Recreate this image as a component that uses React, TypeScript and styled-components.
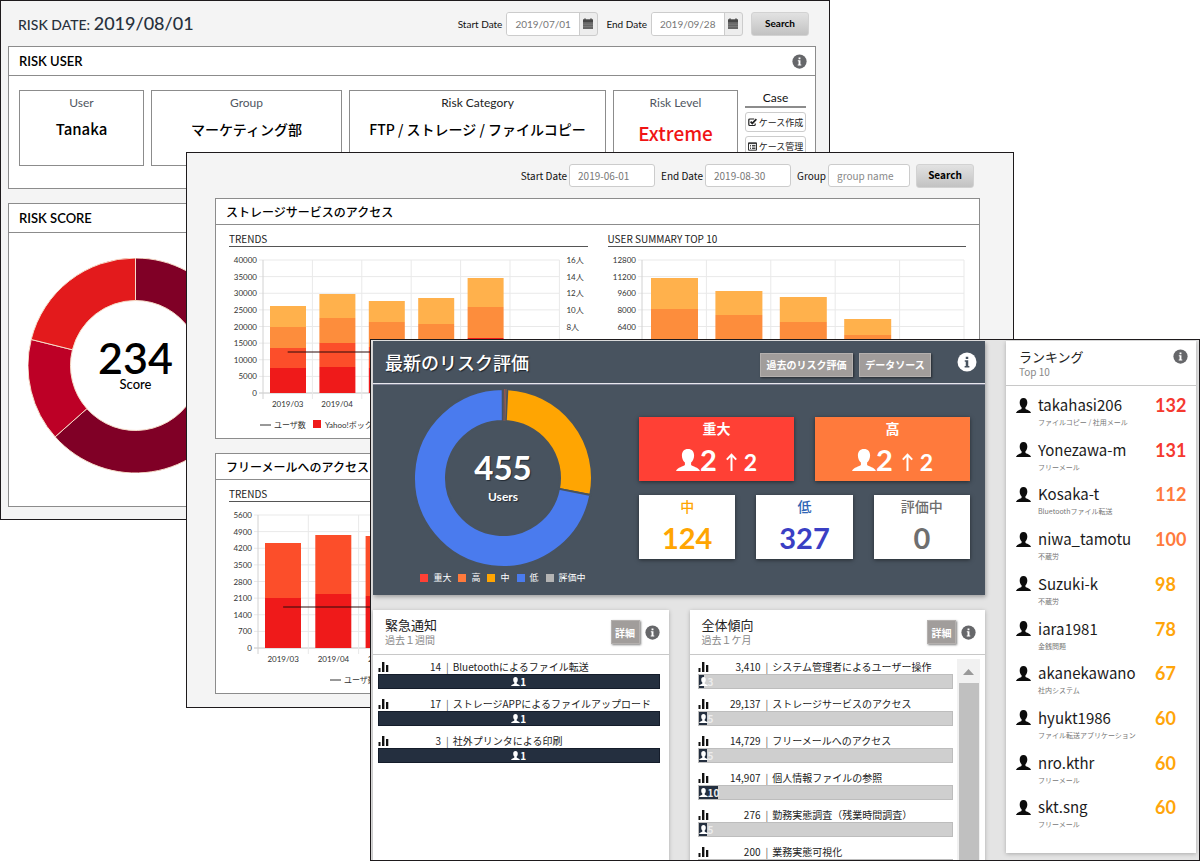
import React from 'react';
import styled, { createGlobalStyle } from 'styled-components';

const GOTHIC = '"Noto Sans CJK JP", sans-serif';
const LATO = 'Lato, "Noto Sans CJK JP", sans-serif';

const GlobalStyle = createGlobalStyle`
  *, *::before, *::after { box-sizing: border-box; }
  html, body, #root { height: 100%; }
  body { margin: 0; background: #fff; color: #111; font-family: ${GOTHIC}; }
  h1, h2, h3, p, ul, dl, dd { margin: 0; padding: 0; font-weight: inherit; }
  ul { list-style: none; }
  button, input { font-family: inherit; margin: 0; }
  svg { display: block; flex: none; }
`;

/* ---------- windows on the canvas ---------- */

const Canvas = styled.div`
  position: relative;
  min-width: 1000px;
  min-height: 100%;
  overflow: hidden;
`;

const Frame = styled.section<{ $left: number; $right: number; $top: number }>`
  position: absolute;
  left: ${(p) => p.$left}px;
  right: ${(p) => p.$right}px;
  top: ${(p) => p.$top}px;
  border: 1px solid #1e1a1c;
  background: #f4f4f4;
`;

const UserFrame = styled(Frame)`
  padding: 0 13px 12px 7px;
`;

const TrendFrame = styled(Frame)`
  padding: 0 33px 13px 28px;
`;

const BoardFrame = styled(Frame)`
  bottom: 0;
  overflow: hidden;
  background: #e4e4e4;
  padding: 1px 3px 0 2px;
  display: grid;
  grid-template-columns: minmax(0, 1fr) 190px;
  column-gap: 21px;
`;

/* ---------- shared parts ---------- */

const Panel = styled.section`
  background: #fff;
  border: 1px solid #8c8c8c;
  & + & { margin-top: 14px; }
`;

const PanelHead = styled.header<{ $h: number }>`
  display: flex;
  align-items: center;
  justify-content: space-between;
  height: ${(p) => p.$h}px;
  padding: 0 8px 0 10px;
  border-bottom: 1px solid #8c8c8c;
`;

const PanelTitle = styled.h2<{ $lato?: boolean }>`
  font: 500 12px/16px ${GOTHIC};
  ${(p) => p.$lato && `font-family: ${LATO}; font-size: 13px; font-weight: 600;`}
  color: #000;
`;

const IconButton = styled.button`
  display: block;
  padding: 0;
  border: 0;
  background: none;
`;

const InfoIcon = ({ size = 15, disc = '#66676a', mark = '#fff' }) => (
  <svg width={size} height={size} viewBox="0 0 16 16" aria-hidden="true">
    <circle cx="8" cy="8" r="7.6" fill={disc} />
    <path d="M7 3.700h2v1.900H7zM6.200 6.600H9v4.500h.9v1.200H6.100v-1.200H7V7.800h-.8z" fill={mark} />
  </svg>
);

const PersonIcon = ({ w, h, fill = '#fff' }: { w: number; h: number; fill?: string }) => (
  <svg width={w} height={h} viewBox="0 0 24 22" preserveAspectRatio="none" aria-hidden="true">
    <path
      fill={fill}
      d="M12 0C8 0 5.900 2.600 5.900 6.600c0 2.900 1.200 5.600 3 7v2.300C7.600 17.600 1.300 18 0 22h24c-1.300-4-7.600-4.400-8.900-6.100v-2.300c1.800-1.400 3-4.100 3-7C18.100 2.600 16 0 12 0z"
    />
  </svg>
);

const CalendarIcon = () => (
  <svg width="10" height="11" viewBox="0 0 10 11" aria-hidden="true">
    <path d="M0 1.500h10V11H0zM1 .5h2v2H1zM7 .5h2v2H7z" fill="#666" />
    <path d="M0 1.500h10v2.500H0z" fill="#484848" />
    <path d="M0 6.200h10M0 8.600h10" stroke="#8c8c8c" strokeWidth=".6" />
  </svg>
);

const CheckIcon = () => (
  <svg width="9" height="9" viewBox="0 0 9 9" fill="none" stroke="#222" aria-hidden="true">
    <path d="M6.200 1H1.800Q.8 1 .8 2v4.500q0 1 1 1h4.400q1 0 1-1V5.500" strokeWidth="1.200" />
    <path d="M2.600 3.600l1.700 1.800L8.400 1.200" strokeWidth="1.700" />
  </svg>
);

const ListIcon = () => (
  <svg width="9" height="9" viewBox="0 0 9 9" fill="none" stroke="#333" aria-hidden="true">
    <path d="M.5.8h8v7.400h-8zM.5 1.600h8" />
    <path d="M2 3.500h1M4 3.500h3.500M2 5h1M4 5h3.500M2 6.500h1M4 6.500h3.500" strokeWidth=".9" />
  </svg>
);

const BarsIcon = () => (
  <svg width="11" height="10" viewBox="0 0 11 10" aria-hidden="true">
    <path d="M.5 6h2v4h-2zM4 0h2.400v10H4zM8 3h2.300v7H8z" fill="#111" />
  </svg>
);

/* ---------- search toolbars ---------- */

const Toolbar = styled.form`
  display: flex;
  align-items: center;
  height: 45px;
`;

const RiskToolbar = styled(Toolbar)`
  padding: 0 7px 0 10px;
`;

const TrendToolbar = styled(Toolbar)`
  justify-content: flex-end;
  padding-right: 6px;
`;

const DateHeading = styled.h1`
  flex: 1;
  font: 500 14px/20px ${LATO};
  color: #27313c;
  white-space: nowrap;
`;

const DateFigure = styled.span`
  font-size: 18px;
`;

const Field = styled.div<{ $lato?: boolean }>`
  display: flex;
  align-items: center;
  gap: ${(p) => (p.$lato ? 4 : 2)}px;
  margin-right: ${(p) => (p.$lato ? 8 : 6)}px;
  font: 400 10px/14px ${(p) => (p.$lato ? LATO : GOTHIC)};
`;

const FieldLabel = styled.label`
  color: #111;
  white-space: nowrap;
`;

const TextBox = styled.input<{ $w: number }>`
  width: ${(p) => p.$w}px;
  height: 23px;
  padding: 0 8px;
  border: 1px solid #ccc;
  border-radius: 3px;
  background: #fff;
  color: #777;
  font-size: 10px;
  &::placeholder { color: #888; opacity: 1; }
`;

const DateGroup = styled.span`
  display: flex;
  height: 24px;
  border: 1px solid #ccc;
  border-radius: 3px;
  background: #ededed;
  overflow: hidden;
`;

const DateBox = styled(TextBox)`
  height: 22px;
  border-width: 0 1px 0 0;
  border-radius: 0;
`;

const CalendarButton = styled(IconButton)`
  width: 17px;
  padding: 0 3px;
`;

const SearchButton = styled.button`
  height: 24px;
  width: 58px;
  border: 1px solid #d2d2d2;
  border-radius: 3px;
  background: linear-gradient(#e2e2e2, #c2c2c2);
  color: #000;
  font-size: 10px;
  font-weight: 700;
  padding: 0 0 2px;
`;

const RiskSearch = styled(SearchButton)`
  font-family: ${LATO};
`;

/* ---------- risk user ---------- */

const UserGrid = styled.div`
  display: grid;
  grid-template-columns: 125fr 191fr 257fr 125fr 61fr;
  gap: 7px;
  padding: 14px 9px 22px 10px;
`;

const FactBox = styled.div`
  height: 76px;
  border: 1px solid #8c8c8c;
  padding-top: 4px;
  text-align: center;
  white-space: nowrap;
`;

const FactLabel = styled.p<{ $dark?: boolean }>`
  font: 400 12px/16px ${LATO};
  color: ${(p) => (p.$dark ? '#222' : '#4f5661')};
`;

const FactValue = styled.p<{ $size?: number; $color?: string }>`
  margin-top: 4px;
  font-weight: 500;
  font-size: ${(p) => p.$size ?? 14}px;
  line-height: ${(p) => (p.$size && p.$size > 16 ? 36 : 28)}px;
  color: ${(p) => p.$color ?? '#000'};
`;

const CaseTitle = styled.p`
  border-bottom: 2px solid #8c8c8c;
  font: 400 12px/16px ${LATO};
  text-align: center;
`;

const CaseButton = styled.button`
  display: flex;
  align-items: center;
  justify-content: center;
  gap: 2px;
  width: 100%;
  height: 20px;
  margin-top: 4px;
  padding: 0;
  border: 1px solid #ccc;
  border-radius: 3px;
  background: #fff;
  color: #222;
  font-size: 9px;
  white-space: nowrap;
`;

/* ---------- doughnuts ---------- */

const arc = (c: number, r0: number, r1: number, a0: number, a1: number) => {
  const pt = (r: number, a: number) => {
    const t = ((a - 90) * Math.PI) / 180;
    return `${(c + r * Math.cos(t)).toFixed(2)} ${(c + r * Math.sin(t)).toFixed(2)}`;
  };
  const large = a1 - a0 > 180 ? 1 : 0;
  return `M${pt(r1, a0)}A${r1} ${r1} 0 ${large} 1 ${pt(r1, a1)}L${pt(r0, a1)}A${r0} ${r0} 0 ${large} 0 ${pt(r0, a0)}Z`;
};

/* A sliver is too thin to carry the separator line. */
type Slice = { from: number; to: number; fill: string; sliver?: boolean };

const Ring = styled.div`
  display: grid;
  justify-items: center;
  align-items: center;
  & > * { grid-area: 1 / 1; }
`;

const RingText = styled.p<{ $light?: boolean }>`
  text-align: center;
  font-family: ${LATO};
  color: ${(p) => (p.$light ? '#fff' : '#000')};
  text-shadow: ${(p) => (p.$light ? '1px 1px 1px #222a33' : 'none')};
`;

const RingValue = styled.span<{ $size: number; $line: number; $bold?: boolean }>`
  display: block;
  font-size: ${(p) => p.$size}px;
  line-height: ${(p) => p.$line}px;
  font-weight: ${(p) => (p.$bold ? 700 : 600)};
`;

const RingCaption = styled.span<{ $size: number; $gap?: number; $bold?: boolean }>`
  display: block;
  margin-top: ${(p) => p.$gap ?? 0}px;
  font-size: ${(p) => p.$size}px;
  line-height: 16px;
  font-weight: ${(p) => (p.$bold ? 700 : 500)};
`;

const Doughnut = ({
  size,
  hole,
  slices,
  line,
  lineWidth,
}: {
  size: number;
  hole: number;
  slices: Slice[];
  line: string;
  lineWidth: number;
}) => (
  <svg width={size} height={size} viewBox={`0 0 ${size} ${size}`} aria-hidden="true">
    {slices.map((s) => (
      <path
        key={s.from}
        d={arc(size / 2, hole, size / 2, s.from, s.to)}
        fill={s.fill}
        stroke={s.sliver ? 'none' : line}
        strokeWidth={lineWidth}
      />
    ))}
  </svg>
);

const ScoreBody = styled.div`
  display: flex;
  padding: 25px 0 33px 19px;
`;

const scoreSlices: Slice[] = [
  { from: 0, to: 228.4, fill: '#800026' },
  { from: 228.4, to: 284, fill: '#bd0026' },
  { from: 284, to: 360, fill: '#e31a1c' },
];

const userSlices: Slice[] = [
  { from: 2.8, to: 101, fill: '#ffa502' },
  { from: 101, to: 359.8, fill: '#4a7bee' },
  { from: 0.6, to: 1.2, fill: '#a8544a', sliver: true },
  { from: 1.7, to: 2.2, fill: '#a86a4a', sliver: true },
];

/* ---------- stacked column charts ---------- */

const ChartBody = styled.div`
  display: grid;
  grid-template-columns: minmax(0, 1fr) minmax(0, 1fr);
  column-gap: 20px;
  padding: 7px 13px 0;
`;

const ChartTitle = styled.h3`
  font: 400 10px/14px ${GOTHIC};
  color: #222;
  border-bottom: 1px solid #555;
`;

const ChartSvg = styled.svg`
  font: 400 8px ${LATO};
  fill: #333;
`;

/* One column lists the y of each layer's top edge, from the upper layer down. */
type Column = { label?: string; tops: number[]; fills: string[] };

type ChartProps = {
  ticks: string[];
  rightTicks?: string[];
  left: number;
  step: number;
  slots: number;
  barWidth: number;
  barInset: number;
  columns: Column[];
  line?: number;
  legend?: { x: number; items: string[] };
};

const TOP = 13;
const ROW = 16.625;
const BASE = 146;

const StackChart = (p: ChartProps) => {
  const right = p.left + p.step * p.slots;
  return (
    <ChartSvg width="358" height="191" viewBox="0 0 358 191">
      {p.ticks.map((t, i) => (
        <g key={t}>
          <path
            d={`M${p.left - 4} ${TOP + i * ROW}H${right}`}
            stroke={t === '0' ? '#c4c4c4' : '#e9e9e9'}
          />
          <text x={p.left - 6} y={TOP + i * ROW + 3} textAnchor="end">{t}</text>
        </g>
      ))}
      {p.rightTicks?.map((t, i) => (
        <text key={t} x={right + 7} y={TOP + i * ROW + 3}>{t}</text>
      ))}
      {Array.from({ length: p.slots + 1 }, (_, i) => (
        <path
          key={i}
          d={`M${p.left + i * p.step} ${TOP}V${BASE + 6}`}
          stroke={i === 0 ? '#d2d2d2' : '#e9e9e9'}
        />
      ))}
      {p.columns.map((c, i) => {
        const x = p.left + i * p.step + p.barInset;
        return (
          <g key={i}>
            {c.tops.map((top, k) => (
              <rect
                key={k}
                x={x}
                y={top}
                width={p.barWidth}
                height={(c.tops[k + 1] ?? BASE) - top}
                fill={c.fills[k]}
              />
            ))}
            {c.label && (
              <text x={p.left + (i + 0.5) * p.step} y={BASE + 14} textAnchor="middle">{c.label}</text>
            )}
          </g>
        );
      })}
      {p.line && (
        <path d={`M${p.left + p.step / 2} ${p.line}H${right - p.step}`} stroke="#2b0a0a" />
      )}
      {p.legend && (
        <g>
          <path d={`M${p.legend.x} 178h11`} stroke="#333" />
          <text x={p.legend.x + 14} y="181">{p.legend.items[0]}</text>
          {p.legend.items[1] && (
            <>
              <rect x={p.legend.x + 53} y="173" width="8" height="8" fill="#ef1a1a" />
              <text x={p.legend.x + 65} y="181">{p.legend.items[1]}</text>
            </>
          )}
        </g>
      )}
    </ChartSvg>
  );
};

const warm = ['#ffb14c', '#fd8d3c', '#fc4e2a', '#ef1a1a'];
const hot = ['#fc4e2a', '#ef1a1a'];

const storageColumns: Column[] = [
  { label: '2019/03', tops: [59, 80, 101, 121], fills: warm },
  { label: '2019/04', tops: [47, 71, 96, 120], fills: warm },
  { tops: [54, 75, 100, 121], fills: warm },
  { tops: [51, 77, 100, 121], fills: warm },
  { tops: [31, 60, 91], fills: ['#ffb14c', '#fd8d3c', '#ef1a1a'] },
];

const summaryColumns: Column[] = [
  { tops: [31, 62], fills: warm },
  { tops: [44, 68], fills: warm },
  { tops: [50, 75], fills: warm },
  { tops: [72, 88], fills: warm },
];

const mailColumns: Column[] = [
  { label: '2019/03', tops: [41, 96], fills: hot },
  { label: '2019/04', tops: [33, 92], fills: hot },
  { label: '2019/05', tops: [34, 94], fills: hot },
];

/* ---------- risk dashboard ---------- */

const MainColumn = styled.div`
  display: flex;
  flex-direction: column;
  gap: 15px;
  min-width: 0;
`;

const Hero = styled.section`
  height: 254px;
  background: #48535f;
  box-shadow: 1px 2px 4px rgba(0, 0, 0, 0.3);
`;

const HeroHead = styled.header`
  display: flex;
  align-items: center;
  gap: 6px;
  height: 43px;
  padding: 0 8px 0 12px;
  border-bottom: 1px solid #e8e8ee;
  box-shadow: 0 1px 0 #7b7f92;
`;

const HeroTitle = styled.h1`
  flex: 1;
  font-size: 18px;
  line-height: 26px;
  font-weight: 500;
  color: #fff;
  text-shadow: 1px 1px 1px #1d232b;
`;

const GreyButton = styled.button<{ $w: number }>`
  width: ${(p) => p.$w}px;
  height: 24px;
  padding: 0;
  border: 1px solid #b4b0ae;
  background: #a19d9b;
  box-shadow: 1px 1px 2px rgba(0, 0, 0, 0.5);
  color: #fff;
  font-size: 10px;
  font-weight: 700;
  white-space: nowrap;
`;

const HeroButton = styled(GreyButton)`
  margin-top: 5px;
`;

const HeroInfo = styled(IconButton)`
  margin-left: 20px;
`;

const HeroBody = styled.div`
  display: flex;
`;

const UsersColumn = styled.div`
  width: 260px;
  padding-top: 5px;
`;

const Legend = styled.ul`
  display: flex;
  justify-content: center;
  margin-top: 4px;
  gap: 7px;
`;

const LegendItem = styled.li<{ $color: string }>`
  display: flex;
  align-items: center;
  gap: 5px;
  font: 400 9px/14px ${GOTHIC};
  color: #fff;
  &::before {
    content: '';
    width: 8px;
    height: 8px;
    background: ${(p) => p.$color};
  }
`;

const Levels = styled.div`
  flex: 1;
  padding: 33px 15px 0 6px;
`;

const LevelRow = styled.div<{ $cols: number }>`
  display: grid;
  grid-template-columns: repeat(${(p) => p.$cols}, minmax(0, 1fr));
  column-gap: 21px;
  & + & { margin-top: 14px; }
`;

const LevelCard = styled.article<{ $bg?: string; $fg: string }>`
  height: 64px;
  background: ${(p) => p.$bg ?? '#fff'};
  color: ${(p) => p.$fg};
  box-shadow: 0 1px 4px rgba(0, 0, 0, 0.5);
  text-align: center;
`;

const LevelName = styled.h3<{ $color?: string; $bold?: boolean }>`
  margin-bottom: 2px;
  font-size: 14px;
  line-height: 22px;
  font-weight: ${(p) => (p.$bold ? 700 : 500)};
  color: ${(p) => p.$color ?? 'inherit'};
`;

const LevelCount = styled.p`
  font: 700 29px/38px ${LATO};
`;

const LevelLine = styled.p`
  display: flex;
  justify-content: center;
  align-items: baseline;
  font: 700 29px/38px ${LATO};
`;

const LevelDelta = styled.span`
  font-size: 23px;
`;

const ArrowSvg = styled.svg`
  margin: 0 7px 0 9px;
`;

const ArrowUp = () => (
  <ArrowSvg width="11" height="18" viewBox="0 0 11 18" aria-hidden="true">
    <path d="M5.500 18V1.800M.8 6.600l4.700-5 4.700 5" fill="none" stroke="#fff" strokeWidth="2" />
  </ArrowSvg>
);

const LowerRow = styled.div`
  flex: 1;
  display: grid;
  grid-template-columns: minmax(0, 1fr) minmax(0, 1fr);
  column-gap: 21px;
`;

const Card = styled.section`
  display: flex;
  flex-direction: column;
  background: #fff;
  box-shadow: 0 1px 4px rgba(0, 0, 0, 0.25);
`;

const CardHead = styled.header`
  display: flex;
  align-items: center;
  gap: 5px;
  height: 45px;
  padding: 0 9px 0 12px;
  border-bottom: 1px solid #c8c8c8;
`;

const CardTitles = styled.div`
  flex: 1;
`;

const CardTitle = styled.h2`
  font-size: 13px;
  line-height: 16px;
  color: #222;
`;

const CardSub = styled.p`
  font-size: 10px;
  line-height: 14px;
  color: #888;
`;

const EventArea = styled.div`
  display: flex;
  padding: 4px 9px 0 5px;
`;

const EventList = styled.ul`
  flex: 1;
  min-width: 0;
`;

const EventItem = styled.li`
  height: 37px;
`;

const EventLine = styled.div`
  display: flex;
  align-items: center;
  height: 15px;
  font-size: 10px;
  color: #222;
  white-space: nowrap;
`;

const EventCount = styled.span`
  width: 52px;
  text-align: right;
`;

const EventName = styled.span`
  margin-left: 5px;
  &::before {
    content: '|';
    margin-right: 4px;
    color: #555;
  }
`;

const Meter = styled.div<{ $full?: boolean }>`
  display: flex;
  height: 15px;
  border: 1px solid ${(p) => (p.$full ? '#141c2a' : '#bdbdbd')};
  background: #cfcfcf;
`;

const MeterFill = styled.span<{ $full?: boolean }>`
  display: flex;
  align-items: center;
  justify-content: ${(p) => (p.$full ? 'center' : 'flex-start')};
  background: #242f3f;
  color: ${(p) => (p.$full ? '#fff' : '#ececec')};
  font: 700 10px/12px ${GOTHIC};
`;

const Scroller = styled.div`
  display: flex;
  flex-direction: column;
  align-items: center;
  width: 23px;
  height: 202px;
  margin-left: 4px;
  background: #f1f1f1;
`;

const ScrollUp = styled(IconButton)`
  padding: 10px 0 8px;
`;

const ScrollThumb = styled.span`
  flex: 1;
  width: 20px;
  background: #c0c0c0;
`;

const TrendArea = styled(EventArea)`
  padding: 4px 5px 0 8px;
`;

const RankCard = styled(Card)`
  height: 512px;
`;

const RankHead = styled(CardHead)`
  padding: 0 8px 0 13px;
  align-items: flex-start;
  & > * { margin-top: 8px; }
`;

const RankList = styled.ul`
  flex: 1;
  display: flex;
  flex-direction: column;
  padding: 8px 5px 12px 10px;
`;

const RankItem = styled.li`
  flex: 1;
  display: grid;
  grid-template-columns: 22px 1fr 36px;
  align-content: start;
  align-items: center;
`;

const RankName = styled.span`
  font-size: 15px;
  line-height: 22px;
  color: #1b1b1b;
`;

const RankScore = styled.span<{ $color: string }>`
  font: 700 18px/22px ${LATO};
  color: ${(p) => p.$color};
`;

const RankReason = styled.span`
  grid-column: 2 / 4;
  font-size: 7px;
  line-height: 12px;
  color: #777;
  white-space: nowrap;
`;

const alerts = [
  { count: '14', name: 'Bluetoothによるファイル転送' },
  { count: '17', name: 'ストレージAPPによるファイルアップロード' },
  { count: '3', name: '社外プリンタによる印刷' },
];

const trends = [
  { count: '3,410', name: 'システム管理者によるユーザー操作', users: 3, share: 2 },
  { count: '29,137', name: 'ストレージサービスのアクセス', users: 5, share: 3.5 },
  { count: '14,729', name: 'フリーメールへのアクセス', users: 5, share: 3.5 },
  { count: '14,907', name: '個人情報ファイルの参照', users: 10, share: 7.5 },
  { count: '276', name: '勤務実態調査（残業時間調査）', users: 5, share: 3.5 },
  { count: '200', name: '業務実態可視化', users: 5, share: 3.5 },
];

const RED = '#f5392f';
const CORAL = '#ff7a3c';
const AMBER = '#ffa50a';

const ranking = [
  { name: 'takahasi206', reason: 'ファイルコピー / 社用メール', score: 132, color: RED },
  { name: 'Yonezawa-m', reason: 'フリーメール', score: 131, color: RED },
  { name: 'Kosaka-t', reason: 'Bluetoothファイル転送', score: 112, color: CORAL },
  { name: 'niwa_tamotu', reason: '不蔵労', score: 100, color: CORAL },
  { name: 'Suzuki-k', reason: '不蔵労', score: 98, color: AMBER },
  { name: 'iara1981', reason: '金銭問題', score: 78, color: AMBER },
  { name: 'akanekawano', reason: '社内システム', score: 67, color: AMBER },
  { name: 'hyukt1986', reason: 'ファイル転送アプリケーション', score: 60, color: AMBER },
  { name: 'nro.kthr', reason: 'フリーメール', score: 60, color: AMBER },
  { name: 'skt.sng', reason: 'フリーメール', score: 60, color: AMBER },
];

const Info = () => (
  <IconButton type="button" aria-label="情報">
    <InfoIcon />
  </IconButton>
);

const DateField = ({ id, label, value }: { id: string; label: string; value: string }) => (
  <Field $lato>
    <FieldLabel htmlFor={id}>{label}</FieldLabel>
    <DateGroup>
      <DateBox id={id} $w={73} defaultValue={value} />
      <CalendarButton type="button" aria-label={`${label} calendar`}>
        <CalendarIcon />
      </CalendarButton>
    </DateGroup>
  </Field>
);

const RiskUserWindow = () => (
  <UserFrame $left={0} $right={370} $top={0}>
    <RiskToolbar onSubmit={(e) => e.preventDefault()}>
      <DateHeading>
        RISK DATE: <DateFigure>2019/08/01</DateFigure>
      </DateHeading>
      <DateField id="risk-start" label="Start Date" value="2019/07/01" />
      <DateField id="risk-end" label="End Date" value="2019/09/28" />
      <RiskSearch>Search</RiskSearch>
    </RiskToolbar>
    <Panel>
      <PanelHead $h={29}>
        <PanelTitle $lato>RISK USER</PanelTitle>
        <Info />
      </PanelHead>
      <UserGrid>
        <FactBox>
          <FactLabel>User</FactLabel>
          <FactValue $size={15}>Tanaka</FactValue>
        </FactBox>
        <FactBox>
          <FactLabel>Group</FactLabel>
          <FactValue>マーケティング部</FactValue>
        </FactBox>
        <FactBox>
          <FactLabel $dark>Risk Category</FactLabel>
          <FactValue>FTP / ストレージ / ファイルコピー</FactValue>
        </FactBox>
        <FactBox>
          <FactLabel>Risk Level</FactLabel>
          <FactValue $size={19} $color="#f01414">Extreme</FactValue>
        </FactBox>
        <div>
          <CaseTitle>Case</CaseTitle>
          <CaseButton type="button"><CheckIcon />ケース作成</CaseButton>
          <CaseButton type="button"><ListIcon />ケース管理</CaseButton>
        </div>
      </UserGrid>
    </Panel>
    <Panel>
      <PanelHead $h={29}>
        <PanelTitle $lato>RISK SCORE</PanelTitle>
      </PanelHead>
      <ScoreBody>
        <Ring>
          <Doughnut size={215} hole={65} slices={scoreSlices} line="#f6dcc8" lineWidth={1} />
          <RingText>
            <RingValue $size={43} $line={36}>234</RingValue>
            <RingCaption $size={13}>Score</RingCaption>
          </RingText>
        </Ring>
      </ScoreBody>
    </Panel>
  </UserFrame>
);

const TrendWindow = () => (
  <TrendFrame $left={186} $right={186} $top={152}>
    <TrendToolbar onSubmit={(e) => e.preventDefault()}>
      <Field>
        <FieldLabel htmlFor="trend-start">Start Date</FieldLabel>
        <TextBox id="trend-start" $w={86} defaultValue="2019-06-01" />
      </Field>
      <Field>
        <FieldLabel htmlFor="trend-end">End Date</FieldLabel>
        <TextBox id="trend-end" $w={86} defaultValue="2019-08-30" />
      </Field>
      <Field>
        <FieldLabel htmlFor="trend-group">Group</FieldLabel>
        <TextBox id="trend-group" $w={82} placeholder="group name" />
      </Field>
      <SearchButton>Search</SearchButton>
    </TrendToolbar>
    <Panel>
      <PanelHead $h={26}>
        <PanelTitle>ストレージサービスのアクセス</PanelTitle>
      </PanelHead>
      <ChartBody>
        <div>
          <ChartTitle>TRENDS</ChartTitle>
          <StackChart
            ticks={['40000', '35000', '30000', '25000', '20000', '15000', '10000', '5000', '0']}
            rightTicks={['16人', '14人', '12人', '10人', '8人']}
            left={34}
            step={49.4}
            slots={6}
            barWidth={36}
            barInset={7}
            columns={storageColumns}
            line={105}
            legend={{ x: 31, items: ['ユーザ数', 'Yahoo!ボックス'] }}
          />
        </div>
        <div>
          <ChartTitle>USER SUMMARY TOP 10</ChartTitle>
          <StackChart
            ticks={['12800', '11200', '9600', '8000', '6400']}
            left={34}
            step={64.4}
            slots={5}
            barWidth={47}
            barInset={9}
            columns={summaryColumns}
          />
        </div>
      </ChartBody>
    </Panel>
    <Panel>
      <PanelHead $h={26}>
        <PanelTitle>フリーメールへのアクセス</PanelTitle>
      </PanelHead>
      <ChartBody>
        <div>
          <ChartTitle>TRENDS</ChartTitle>
          <StackChart
            ticks={['5600', '4900', '4200', '3500', '2800', '2100', '1400', '700', '0']}
            left={29}
            step={50.3}
            slots={6}
            barWidth={36}
            barInset={7}
            columns={mailColumns}
            line={105}
            legend={{ x: 101, items: ['ユーザ数'] }}
          />
        </div>
      </ChartBody>
    </Panel>
  </TrendFrame>
);

const UserMeter = ({ users, share }: { users: number; share?: number }) => (
  <Meter $full={share === undefined}>
    <MeterFill $full={share === undefined} style={{ width: `${share ?? 100}%` }}>
      <PersonIcon w={9} h={9} />
      {users}
    </MeterFill>
  </Meter>
);

const BoardWindow = () => (
  <BoardFrame $left={370} $right={0} $top={339}>
    <MainColumn>
      <Hero>
        <HeroHead>
          <HeroTitle>最新のリスク評価</HeroTitle>
          <HeroButton type="button" $w={93}>過去のリスク評価</HeroButton>
          <HeroButton type="button" $w={72}>データソース</HeroButton>
          <HeroInfo type="button" aria-label="情報">
            <InfoIcon size={20} disc="#fff" mark="#48535f" />
          </HeroInfo>
        </HeroHead>
        <HeroBody>
          <UsersColumn>
            <Ring>
              <Doughnut size={178} hole={57} slices={userSlices} line="#48535f" lineWidth={2} />
              <RingText $light>
                <RingValue $size={33} $line={32} $bold>455</RingValue>
                <RingCaption $size={12} $gap={6} $bold>Users</RingCaption>
              </RingText>
            </Ring>
            <Legend>
              <LegendItem $color="#ff4035">重大</LegendItem>
              <LegendItem $color="#ff7a3c">高</LegendItem>
              <LegendItem $color="#ffa502">中</LegendItem>
              <LegendItem $color="#4a7bee">低</LegendItem>
              <LegendItem $color="#b4b4b4">評価中</LegendItem>
            </Legend>
          </UsersColumn>
          <Levels>
            <LevelRow $cols={2}>
              {[{ name: '重大', bg: '#ff4035' }, { name: '高', bg: '#ff7a3c' }].map((l) => (
                <LevelCard key={l.name} $bg={l.bg} $fg="#fff">
                  <LevelName $bold>{l.name}</LevelName>
                  <LevelLine>
                    <PersonIcon w={24} h={22} />
                    2
                    <ArrowUp />
                    <LevelDelta>2</LevelDelta>
                  </LevelLine>
                </LevelCard>
              ))}
            </LevelRow>
            <LevelRow $cols={3}>
              <LevelCard $fg="#ffa502">
                <LevelName>中</LevelName>
                <LevelCount>124</LevelCount>
              </LevelCard>
              <LevelCard $fg="#3a3fc4">
                <LevelName $color="#2f65b5">低</LevelName>
                <LevelCount>327</LevelCount>
              </LevelCard>
              <LevelCard $fg="#6f6f6f">
                <LevelName>評価中</LevelName>
                <LevelCount>0</LevelCount>
              </LevelCard>
            </LevelRow>
          </Levels>
        </HeroBody>
      </Hero>
      <LowerRow>
        <Card>
          <CardHead>
            <CardTitles>
              <CardTitle>緊急通知</CardTitle>
              <CardSub>過去１週間</CardSub>
            </CardTitles>
            <GreyButton type="button" $w={29}>詳細</GreyButton>
            <Info />
          </CardHead>
          <EventArea>
            <EventList>
              {alerts.map((a) => (
                <EventItem key={a.name}>
                  <EventLine>
                    <BarsIcon />
                    <EventCount>{a.count}</EventCount>
                    <EventName>{a.name}</EventName>
                  </EventLine>
                  <UserMeter users={1} />
                </EventItem>
              ))}
            </EventList>
          </EventArea>
        </Card>
        <Card>
          <CardHead>
            <CardTitles>
              <CardTitle>全体傾向</CardTitle>
              <CardSub>過去１ケ月</CardSub>
            </CardTitles>
            <GreyButton type="button" $w={29}>詳細</GreyButton>
            <Info />
          </CardHead>
          <TrendArea>
            <EventList>
              {trends.map((t) => (
                <EventItem key={t.name}>
                  <EventLine>
                    <BarsIcon />
                    <EventCount>{t.count}</EventCount>
                    <EventName>{t.name}</EventName>
                  </EventLine>
                  <UserMeter users={t.users} share={t.share} />
                </EventItem>
              ))}
            </EventList>
            <Scroller>
              <ScrollUp type="button" aria-label="上へ">
                <svg width="11" height="6" viewBox="0 0 11 6" aria-hidden="true">
                  <path d="M0 6L5.500 0 11 6z" fill="#999" />
                </svg>
              </ScrollUp>
              <ScrollThumb />
            </Scroller>
          </TrendArea>
        </Card>
      </LowerRow>
    </MainColumn>
    <RankCard>
      <RankHead>
        <CardTitles>
          <CardTitle>ランキング</CardTitle>
          <CardSub>Top 10</CardSub>
        </CardTitles>
        <Info />
      </RankHead>
      <RankList>
        {ranking.map((r) => (
          <RankItem key={r.name}>
            <PersonIcon w={15} h={15} fill="#0c0c0c" />
            <RankName>{r.name}</RankName>
            <RankScore $color={r.color}>{r.score}</RankScore>
            <RankReason>{r.reason}</RankReason>
          </RankItem>
        ))}
      </RankList>
    </RankCard>
  </BoardFrame>
);

export default function App() {
  return (
    <>
      <GlobalStyle />
      <Canvas>
        <RiskUserWindow />
        <TrendWindow />
        <BoardWindow />
      </Canvas>
    </>
  );
}
